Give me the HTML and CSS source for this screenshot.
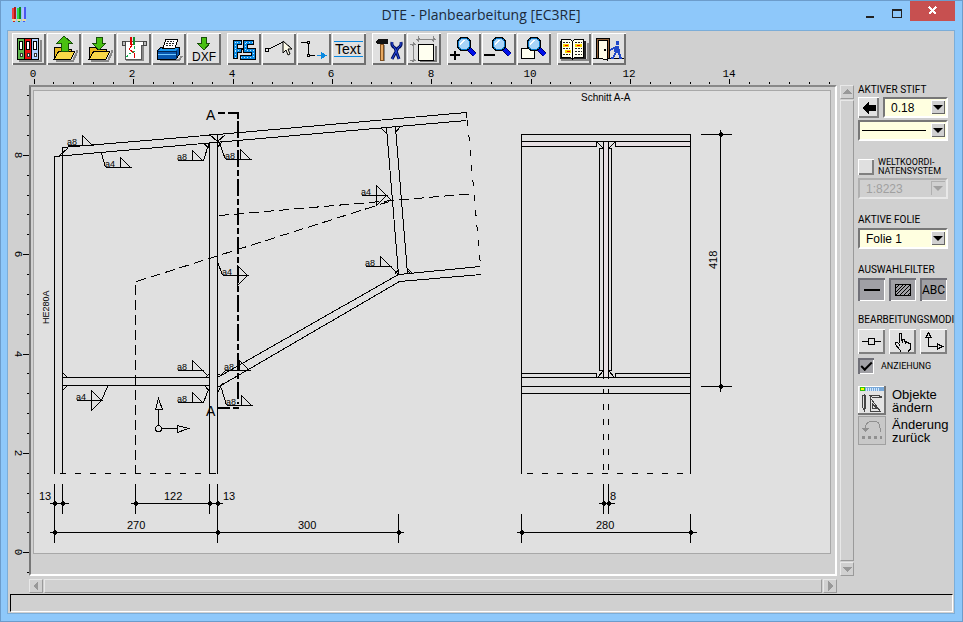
FILE: index.html
```html
<!DOCTYPE html>
<html lang="de">
<head>
<meta charset="utf-8">
<title>DTE - Planbearbeitung [EC3RE]</title>
<link rel="stylesheet" href="styles.css">
</head>
<body>
<svg class="defs" aria-hidden="true">
  <defs>
    <symbol id="lens" viewBox="0 0 34 32">
      <path d="M22 16l6 6" stroke="#000060" stroke-width="5"/>
      <path d="M22 16l6 6" stroke="#0010e8" stroke-width="3"/>
      <circle cx="17" cy="11" r="6" fill="#a8d4f8" stroke="#000" stroke-width="3"/>
      <circle cx="17" cy="11" r="6" fill="#a8d4f8" stroke="#0878c8" stroke-width="1"/>
      <path d="M13 10l3-3h2l-5 6z" fill="#fff"/>
    </symbol>
    <symbol id="folder" viewBox="0 0 34 32">
      <path d="M9 28h17l4-9v-2" fill="none" stroke="#888" stroke-width="2"/>
      <path d="M7 26V15l1-1h5l2 2h9v3" fill="#e8b820" stroke="#000"/>
      <path d="M7 26l5-8h16l-4 8z" fill="#f8d848" stroke="#000"/>
    </symbol>
    <symbol id="weld" viewBox="0 0 28 12" overflow="visible">
      <path d="M0 0h26M15 0v-10l10 10" fill="none" stroke="#000"/>
    </symbol>
    <symbol id="weld2" viewBox="0 0 28 12" overflow="visible">
      <path d="M0 0h26M15 -10v20l10-10z" fill="none" stroke="#000"/>
    </symbol>
    <symbol id="dot" viewBox="0 0 6 6" overflow="visible">
      <path d="M-1 -2h2M-2 -1h4M-2 0h1M1 0h1M-2 1h4M-1 2h2" stroke="#000" fill="none"/>
    </symbol>
  </defs>
</svg>
<div class="window">
  <header class="titlebar">
    <svg class="app-icon" width="16" height="16" viewBox="0 0 16 16">
      <path d="M0 1h2v12H0z" fill="#f04040"/><path d="M2 0h2v13H2z" fill="#b01818"/>
      <path d="M5 1h2v12H5z" fill="#30d848"/><path d="M7 0h2v13H7z" fill="#108820"/>
      <path d="M10 1h2v12h-2z" fill="#b8c0ff"/><path d="M12 0h2v13h-2z" fill="#4858f0"/>
      <path d="M0 12h4v2H0zM5 12h4v2H5zM10 12h4v2h-4z" fill="#e8d8a0"/>
      <path d="M1 14h2v1H1z" fill="#d02020"/><path d="M6 14h2v1H6z" fill="#108820"/><path d="M11 14h2v1h-2z" fill="#4858f0"/>
    </svg>
    <h1>DTE - Planbearbeitung [EC3RE]</h1>
    <div class="caption-buttons">
      <button class="cap" aria-label="Minimieren"><svg width="10" height="16"><path d="M1 13h8v2H1z" fill="#222"/></svg></button>
      <button class="cap" aria-label="Maximieren"><svg width="10" height="16"><path d="M0 6h10v9H0zM1 8v6h8V8z" fill="#222" fill-rule="evenodd"/></svg></button>
      <button class="cap close" aria-label="Schließen"><svg width="10" height="10"><path d="M1 1l7 7M8 1l-7 7" stroke="#fff" stroke-width="2"/></svg></button>
    </div>
  </header>

  <main class="client">
    <nav class="toolbar" aria-label="Werkzeuge">
      <div class="group">
        <button aria-label="Projekte"><svg viewBox="0 0 34 32">
          <path d="M7 28h22V7" fill="none" stroke="#888" stroke-width="2"/>
          <path d="M5.500 5.500h7v21h-7z" fill="#60b850" stroke="#000"/><path d="M12.500 5.500h7v21h-7z" fill="#e81010" stroke="#000"/><path d="M19.500 5.500h7v21h-7z" fill="#b0d0ff" stroke="#000"/>
          <path d="M7.500 8.500h3v8h-3zM14.500 8.500h3v8h-3zM21.500 8.500h3v8h-3z" fill="#fff" stroke="#000"/>
          <path d="M8 20h2v3H8zM15 20h2v3h-2zM22 20h2v3h-2z" fill="#fff" stroke="#333"/>
        </svg></button>
        <button aria-label="Laden"><svg viewBox="0 0 34 32"><use href="#folder" width="34" height="32"/><path d="M17 3l-7 7h4v8h7v-8h4z" fill="#48c010" stroke="#185008"/></svg></button>
        <button aria-label="Sichern"><svg viewBox="0 0 34 32"><use href="#folder" width="34" height="32"/><path d="M14 4h6v6h4l-7 7-7-7h4z" fill="#48c010" stroke="#185008"/></svg></button>
        <button aria-label="Plotten"><svg viewBox="0 0 34 32">
          <path d="M9 27h17V12" stroke="#888" fill="none" stroke-width="2"/>
          <path d="M7 8h19v4h-2v14H8V12H5V9z" fill="#fff" stroke="#555"/><path d="M5 8h3v4H5zM26 8h3v4h-3z" fill="#bbb" stroke="#444"/>
          <path d="M14 4v8" stroke="#e00000" stroke-width="2"/><path d="M17 4v8" stroke="#109030" stroke-width="2"/>
          <path d="M16 11l-4 5 5 4v5" stroke="#e00000" fill="none"/><path d="M17 13v3m1 2l-6 3-3 4" stroke="#10b050" fill="none" stroke-dasharray="3 1"/>
        </svg></button>
        <button aria-label="Drucken"><svg viewBox="0 0 34 32">
          <path d="M8 27h19l3-4" stroke="#888" fill="none" stroke-width="2"/>
          <path d="M5 18l4-4h18v8l-3 4H5z" fill="#0858b0" stroke="#000"/><path d="M6 18l3-3h17l-2 3z" fill="#1898f0"/><path d="M6 21h18" stroke="#70c8ff"/><path d="M24 18h-18M24 18v8" stroke="#002858"/>
          <path d="M11 15l3-9h12l-3 9z" fill="#fff" stroke="#000"/><path d="M15 8h7M14 10h8M14 12h7" stroke="#222" stroke-dasharray="2 1"/>
        </svg></button>
        <button aria-label="DXF-Export"><svg viewBox="0 0 34 32"><path d="M14 4h5v6h4l-6 7-7-7h4z" fill="#48c010" stroke="#185008"/><text class="t-dxf" x="5" y="28">DXF</text></svg></button>
      </div>
      <div class="group">
        <button aria-label="Gesamtansicht"><svg viewBox="0 0 34 32">
          <path d="M15 9H8v17M8 17h7M27 9h-9v8h8v7H13M15 17v-2" fill="none" stroke="#000" stroke-width="5"/>
          <path d="M14 9H8v16M8 17h6M26 9h-8v8h8v7H14" fill="none" stroke="#0888e0" stroke-width="3"/>
          <path d="M14 9H8v16M8 17h6M26 9h-8v8h8v7H14" fill="none" stroke="#c0e8ff" stroke-dasharray="1 2"/>
        </svg></button>
        <button aria-label="Punkt wählen"><svg viewBox="0 0 34 32"><path d="M5 17l16-8 7 5" fill="none" stroke="#000"/><path d="M3.500 15.500h3v3h-3z" fill="#eee" stroke="#000"/><path class="smooth" d="M21 8v12l3-3 2 5 2-1-2-5h4z" fill="#fffce8" stroke="#000"/></svg></button>
        <button aria-label="Polygon"><svg viewBox="0 0 34 32"><path d="M4 9.500h7.500v13H18" fill="none" stroke="#000"/><path d="M10.500 8.500h2v2h-2zM10.500 21.500h2v2h-2z" fill="#eee" stroke="#000"/><path d="M20 22.500h5" stroke="#0888e0"/><path d="M24 19l6 3.500-6 3.500z" fill="#0888e0"/></svg></button>
        <button aria-label="Text"><svg viewBox="0 0 34 32"><path d="M2 8.500h29M2 23.500h29" stroke="#0888e0"/><text class="t-text" x="3" y="21">Text</text></svg></button>
      </div>
      <div class="group">
        <button aria-label="Einstellungen"><svg viewBox="0 0 34 32">
          <path d="M12 12v16" stroke="#888" stroke-width="2"/><path d="M8 11h3v16H8z" fill="#e8a860" stroke="#805020"/><path d="M3 9l3-3h10v5H6z" fill="#111"/>
          <g class="smooth" fill="none"><path d="M20 9q-1 4 3 6l4 11M29 9q1 4-3 6l-6 11" stroke="#001060" stroke-width="3"/><path d="M20 9q-1 4 3 6l4 11M29 9q1 4-3 6l-6 11" stroke="#2848e0"/></g>
        </svg></button>
        <button aria-label="Blattformat"><svg viewBox="0 0 34 32"><path d="M13 28h16V13" stroke="#777" fill="none" stroke-width="2"/><path d="M11.500 11.500h15v16h-15z" fill="#fffff0" stroke="#000"/><path d="M9 6.500h20M11.500 3v6M26.500 3v6M6.500 9v20M3 11.500h6M3 27.500h6M10 8l3-3M25 8l3-3M5 13l3-3M5 29l3-3" stroke="#888"/></svg></button>
      </div>
      <div class="group">
        <button aria-label="Vergrößern"><svg viewBox="0 0 34 32"><use href="#lens" width="34" height="32"/><path d="M3 22h10M8 18v9" stroke="#000" stroke-width="2"/></svg></button>
        <button aria-label="Verkleinern"><svg viewBox="0 0 34 32"><use href="#lens" width="34" height="32"/><path d="M2 22h11" stroke="#000" stroke-width="2"/></svg></button>
        <button aria-label="Ausschnitt"><svg viewBox="0 0 34 32"><path d="M4.500 15.500h13v10h-13z" fill="#fffff0" stroke="#000"/><use href="#lens" width="34" height="32"/></svg></button>
      </div>
      <div class="group">
        <button aria-label="Handbuch"><svg viewBox="0 0 34 32">
          <path d="M3 8h26v18H3z" fill="#222"/><path d="M4 27h27V10" stroke="#888" fill="none" stroke-width="2"/>
          <path d="M4.500 6.500h9l2 2 2-2h9v18h-9l-2 2-2-2h-9z" fill="#fffff0" stroke="#000"/><path d="M15.500 8v18" stroke="#000"/>
          <path d="M6 12.500h6M8 18.500h6M18 12.500h7" stroke="#f8d800" stroke-width="3"/><path d="M8 12.500h3M10 18.500h3M20 12.500h3" stroke="#f00000"/>
          <path d="M6 9.500h7M6 15.500h7M6 21.500h7M18 9.500h7M18 15.500h7M18 18.500h7M18 21.500h7" stroke="#222" stroke-dasharray="2 1"/>
        </svg></button>
        <button aria-label="Beenden"><svg viewBox="0 0 34 32">
          <path d="M1 25.500h31" stroke="#000"/><path d="M4 5h13v20H4z" fill="#906038" stroke="#000"/><path d="M6.500 7.500h9V27l-9-2z" fill="#fffce8" stroke="#000"/><path d="M12 16h2v2h-2z" fill="#000"/>
          <path d="M24 8h3v4h-3zM23 13h4l1 5-1 2h-4l-1-3z" fill="#2048c8"/><path d="M24 14l-6 3M24 19l-3 6h-2M26 19l2 3v3h2" stroke="#2048c8" stroke-width="2" fill="none"/>
        </svg></button>
      </div>
    </nav>

    <div class="workspace">
      <svg class="ruler ruler-x" role="img" aria-label="Lineal horizontal">
        <path class="minor" d="M24 17v2M44 17v2M64 17v2M84 17v2M124 17v2M144 17v2M163 17v2M183 17v2M223 17v2M243 17v2M263 17v2M283 17v2M322 17v2M342 17v2M362 17v2M382 17v2M422 17v2M442 17v2M462 17v2M482 17v2M521 17v2M541 17v2M561 17v2M581 17v2M621 17v2M641 17v2M661 17v2M680 17v2M720 17v2M740 17v2M760 17v2M780 17v2M800 17v2"/>
        <path d="M5 14v5M104 14v5M204 14v5M303 14v5M402 14v5M502 14v5M601 14v5M700 14v5"/>
        <g class="digits"><text x="4" y="12">0</text><text x="103" y="12">2</text><text x="203" y="12">4</text><text x="302" y="12">6</text><text x="402" y="12">8</text><text x="501" y="12">10</text><text x="600" y="12">12</text><text x="700" y="12">14</text></g>
      </svg>
      <svg class="ruler ruler-y" role="img" aria-label="Lineal vertikal">
        <path class="minor" d="M19 10h2M19 30h2M19 50h2M19 90h2M19 110h2M19 129h2M19 149h2M19 189h2M19 209h2M19 229h2M19 249h2M19 288h2M19 308h2M19 328h2M19 348h2M19 388h2M19 408h2M19 427h2M19 447h2M19 487h2"/>
        <path d="M15 70h6M15 169h6M15 269h6M15 368h6M15 467h6"/>
        <g class="digits"><text transform="translate(7 70) rotate(90)">8</text><text transform="translate(7 169) rotate(90)">6</text><text transform="translate(7 269) rotate(90)">4</text><text transform="translate(7 368) rotate(90)">2</text><text transform="translate(7 467) rotate(90)">0</text></g>
      </svg>
      <section class="view" aria-label="Planansicht">
        <div class="sheet">
        <svg class="plan" viewBox="34 91 796 462">
          <g class="ink" transform="translate(.5 .5)">
            <path d="M54 156V473M62 147V473M209 142V473M217 134V473"/>
            <path d="M62 147L217 134L466 112V117M54 156L466 120M54 156H58L68 147"/>
            <path d="M203 143L208 147V142M209 134L217 141L225 134M217 147L222 141M209 134H217"/>
            <path d="M386 127L398 274M395 127L407 273M381 128L386 133V128M395 132L399 127"/>
            <path d="M398 274L480 266M399 281L481 274M217 377L398 274M217 387L399 281"/>
            <path d="M394 274L398 269V274M407 268L412 273H407zM407 270L410 273" />
            <path d="M62 377H209M62 385H209M62 372L67 377M62 390L67 385M205 377L209 373M204 385L209 391M217 374L222 375M217 392L222 383"/>
            <path class="d-axis" d="M219 215L392 200L474 193M136 281L392 200M135 284V473"/>
            <path class="d-break" d="M467 120L480 265M59 473H217"/>
            <path d="M203 160L208 144M218 140L225 159M101 153L105 167M217 261L222 275M386 195L392 201M390 266L398 274M107 386L101 400M202 370L208 376M224 371L218 377M203 402L208 389M221 388L226 405"/>
            <g>
              <use href="#weld" x="67" y="145" width="28" height="12"/><use href="#weld" x="105" y="167" width="28" height="12"/>
              <use href="#weld" x="177" y="160" width="28" height="12"/><use href="#weld" x="225" y="159" width="28" height="12"/>
              <use href="#weld2" x="222" y="275" width="28" height="12"/><use href="#weld2" x="361" y="195" width="28" height="12"/>
              <use href="#weld" x="365" y="266" width="28" height="12"/><use href="#weld2" x="76" y="400" width="28" height="12"/>
              <use href="#weld" x="177" y="370" width="28" height="12"/><use href="#weld" x="224" y="370" width="28" height="12"/>
              <use href="#weld" x="177" y="402" width="28" height="12"/><use href="#weld" x="226" y="405" width="28" height="12"/>
            </g>
            <path class="section" d="M217 112H224M227 112H237V118"/>
            <path class="section d-section" d="M237 120V403"/>
            <path class="section" d="M217 407H229M232 407H238"/>
            <path d="M158 425V408M155 409H162L158 398zM161 428H177M177 425V432L188 428z"/><circle cx="158" cy="428" r="3" class="sheet-fill"/>
            <path d="M54 483V542M62 483V513M135 483V513M209 483V513M217 483V542M398 513V542M49 503H68M130 503H222M49 532H403"/>

            <path class="flange" d="M521 141H596V146H521zM615 141H690V146H615zM603 141H608V377H603z"/>
            <path d="M521 473V134H690V473M521 141H690M521 146H596V141M690 146H615V141M597 142L603 148M614 142L608 148"/>
            <path d="M603 141V378M608 141V378M603 148H599V370H603M608 148H611V370H608M521 373H596V377M690 373H615V377M597 377L603 370M614 377L608 370M521 377H690M521 386H690M521 393H690"/>
            <path d="M603 388V393M608 388V393"/>
            <path class="d-break" d="M603 403V470M608 403V470M526 473H684"/>
            <path d="M603 483V513M608 483V513M598 503H614M521 513V542M690 513V542M516 532H696M720 129V391M700 134H731M700 386H731"/>
            <g>
              <use href="#dot" x="54" y="503" width="6" height="6"/><use href="#dot" x="62" y="503" width="6" height="6"/><use href="#dot" x="135" y="503" width="6" height="6"/><use href="#dot" x="209" y="503" width="6" height="6"/><use href="#dot" x="217" y="503" width="6" height="6"/>
              <use href="#dot" x="54" y="532" width="6" height="6"/><use href="#dot" x="217" y="532" width="6" height="6"/><use href="#dot" x="398" y="532" width="6" height="6"/>
              <use href="#dot" x="603" y="503" width="6" height="6"/><use href="#dot" x="608" y="503" width="6" height="6"/><use href="#dot" x="521" y="532" width="6" height="6"/><use href="#dot" x="690" y="532" width="6" height="6"/><use href="#dot" x="720" y="134" width="6" height="6"/><use href="#dot" x="720" y="386" width="6" height="6"/>
            </g>
          </g>
          <g class="dim">
            <text x="39" y="500">13</text><text x="164" y="500">122</text><text x="223" y="500">13</text><text x="127" y="529">270</text><text x="298" y="529">300</text>
            <text x="610" y="500">8</text><text x="596" y="529">280</text><text transform="translate(717 269) rotate(-90)">418</text>
            <text class="caption" x="581" y="101">Schnitt A-A</text><text class="profile" transform="translate(49 324) rotate(-90)">HE280A</text>
          </g>
          <g class="mark"><text x="206" y="120">A</text><text x="206" y="416">A</text></g>
          <g class="weld-size">
            <text x="67" y="145">a8</text><text x="105" y="167">a4</text><text x="177" y="160">a8</text><text x="225" y="159">a8</text><text x="222" y="275">a4</text><text x="361" y="195">a4</text><text x="365" y="266">a8</text><text x="76" y="400">a4</text><text x="177" y="370">a8</text><text x="224" y="370">a8</text><text x="177" y="402">a8</text><text x="226" y="405">a8</text>
          </g>
        </svg>
        </div>
      </section>
      <div class="scroll scroll-y">
        <button aria-label="Nach oben"><svg width="10" height="10"><path d="M0 7l5-5 5 5z"/></svg></button>
        <div class="thumb"></div>
        <button aria-label="Nach unten"><svg width="10" height="10"><path d="M0 3l5 5 5-5z"/></svg></button>
      </div>
      <div class="scroll scroll-x">
        <button aria-label="Nach links"><svg width="10" height="10"><path d="M7 0L2 5l5 5z"/></svg></button>
        <div class="thumb"></div>
        <button aria-label="Nach rechts"><svg width="10" height="10"><path d="M3 0l5 5-5 5z"/></svg></button>
      </div>

      <aside class="panel">
        <section class="pen">
          <label for="pen">AKTIVER STIFT</label>
          <div class="row">
            <button class="raised back" aria-label="Stift zurück"><svg width="14" height="14"><path d="M0 7l7-7v4h7v6H7v4z"/></svg></button>
            <div class="combo"><select id="pen"><option>0.18</option></select><span class="arrow"></span></div>
          </div>
          <div class="combo line"><select aria-label="Linientyp"><option></option></select><span class="stroke"></span><span class="arrow"></span></div>
        </section>
        <section class="coords">
          <label class="check"><input type="checkbox"><span>WELTKOORDI-<br>NATENSYSTEM</span></label>
          <div class="combo off"><select disabled aria-label="Maßstab"><option>1:8223</option></select><span class="arrow"></span></div>
        </section>
        <section class="layer">
          <label for="layer">AKTIVE FOLIE</label>
          <div class="combo"><select id="layer"><option>Folie 1</option></select><span class="arrow"></span></div>
        </section>
        <section class="filters">
          <h2>AUSWAHLFILTER</h2>
          <div class="trio">
            <button class="pressed" aria-label="Linien"><svg width="22" height="18"><path d="M3 9h16" stroke="#000" stroke-width="2"/></svg></button>
            <button class="pressed" aria-label="Flächen"><svg width="22" height="18"><path d="M3.500 3.500h15v11h-15z" fill="none" stroke="#000"/><path d="M4 7l3-3M4 11l7-7M4 14L14 4M8 14L18 4M12 14l6-6M16 14l2-2" stroke="#000"/></svg></button>
            <button class="pressed abc">ABC</button>
          </div>
        </section>
        <section class="modes">
          <h2>BEARBEITUNGSMODI</h2>
          <div class="trio">
            <button class="raised" aria-label="Punkt"><svg width="22" height="20"><path d="M1 9.500h6M14 9.500h6M7.500 6.500h6v6h-6z" fill="none" stroke="#000"/></svg></button>
            <button class="raised" aria-label="Verschieben"><svg width="22" height="20"><path d="M7.500 11V1.500h2V8l1-1h2v2h2v1h2v1h2v6l-2 2v1H8v-2l-5-6v-2h2l2 2v2M10.500 8v3M13.500 9v3" fill="none" stroke="#000"/></svg></button>
            <button class="raised" aria-label="Achsen"><svg width="22" height="20"><path d="M5.500 6v8.500H14M3 5.500h5l-2.500-5zM14.500 12v5l5-2.500z" fill="none" stroke="#000"/></svg></button>
          </div>
          <label class="check snap"><input type="checkbox" checked><span>ANZIEHUNG</span></label>
        </section>
        <section class="actions">
          <button class="action"><svg width="28" height="29" viewBox="0 0 28 29">
            <path d="M0 0h28v29H0z" fill="#e4e4e4"/><path d="M0 0h28v1H0zM0 0h1v29H0z" fill="#fff"/><path d="M2 1h24v4H2z" fill="#78a8d8"/><path d="M2 1h5v4H2z" fill="#30c010"/><path d="M3 2h3v2H3z" fill="#ff0"/><path d="M8 3h14" stroke="#d0e8ff" stroke-dasharray="1 1" stroke-width="3"/>
            <path d="M0 29h28V0h-2v27H0z" fill="#777"/><path d="M6.500 8v17M4.500 9h3v12l-1 4-2-4zM14 11l-3-2h8l5 2zM12.500 12v13H22zM14.500 18v4h4z" fill="none" stroke="#444"/></svg><span>Objekte ändern</span></button>
          <button class="action"><svg width="28" height="29" viewBox="0 0 28 29">
            <path d="M.5.500h27v28H.500z" fill="#c8c8c8" stroke="#a0a0a0"/><path d="M7 12q1-7 8-7t7 7v4" fill="none" stroke="#909090"/><path d="M3 12h8l-4 4z" fill="#909090"/><path d="M4 21h20" stroke="#909090" stroke-width="3" stroke-dasharray="3 3"/></svg><span>Änderung zurück</span></button>
        </section>
      </aside>
    </div>
    <footer class="status"></footer>
  </main>
</div>
</body>
</html>
```
FILE: styles.css
```css
* { box-sizing: border-box; }
body { margin: 0; font-family: "Liberation Sans", Arial, sans-serif; font-size: 12px; color: #000; }
button { padding: 0; border: 0; font: inherit; color: inherit; background: none; }
h1, h2 { margin: 0; font-weight: 400; }
svg { display: block; shape-rendering: crispEdges; }
.smooth { shape-rendering: auto; }
.defs { position: absolute; width: 0; height: 0; }

.window { display: flex; flex-direction: column; min-height: 100vh; padding: 0 7px 7px 6px; border: 1px solid #6c9ccb; background: #8ec8fa; }
.titlebar { display: grid; grid-template-columns: 150px 1fr 150px; align-items: start; height: 29px; flex: none; }
.app-icon { margin: 6px 0 0 5px; }
h1 { padding-top: 4px; text-align: center; font: 14px/20px "Open Sans", "Noto Sans", sans-serif; color: #1b2a3a; white-space: nowrap; }
.caption-buttons { display: flex; justify-content: flex-end; }
.cap { display: grid; place-items: center; width: 27px; height: 20px; }
.cap svg { height: 16px; }
.close { width: 45px; background: #c75050; }
.close svg { height: 10px; }

.client { display: flex; flex-direction: column; flex: 1; min-height: 0; border: 1px solid #7badd8; background: #d0d0d0; }
.toolbar { display: flex; gap: 6px; padding: 2px 4px 0; }
.group { display: flex; gap: 1px; }
.toolbar button { width: 34px; height: 32px; background: #e0e0e0; box-shadow: inset 1px 1px #fff, inset -2px -2px #707070; }
.toolbar svg { width: 34px; height: 32px; }
.toolbar text { font-family: "Liberation Sans", Arial, sans-serif; }
.t-dxf { font-size: 12px; }
.t-text { font-size: 14px; }

.workspace { display: grid; grid-template-columns: 21px minmax(0, 1fr) 17px 100px; grid-template-rows: 20px minmax(0, 1fr) 16px; column-gap: 0; flex: 1; min-height: 0; }
.ruler { width: 100%; height: 100%; overflow: visible; }
.ruler path { stroke: #000; stroke-width: 1px; fill: none; }
.ruler-x { grid-area: 1 / 2; }
.ruler-y { grid-area: 2 / 1; }
.digits { font: 11px "Liberation Mono", monospace; text-anchor: middle; }
.view { grid-area: 2 / 2; display: flex; padding: 3px 4px 20px 2px; border: 2px solid; border-color: #888 #fff #fff #777; background: #d0d0d0; }
.sheet { flex: 1; min-width: 0; border: 1px solid #a8a8a8; background: #e0e0e0; }
.plan { width: 100%; height: 100%; }
.ink { fill: none; stroke: #000; stroke-width: 1px; }
.d-axis { stroke-dasharray: 10 5; }
.d-break { stroke-dasharray: 6 9; }
.section { stroke-width: 2px; }
.d-section { stroke-dasharray: 17 3 6 3; }
.flange { fill: #e6dfe3; stroke: none; }
.sheet-fill { fill: #e0e0e0; }
.dim, .mark, .weld-size { font-family: "Liberation Sans", Arial, sans-serif; }
.dim { font-size: 11px; }
.caption { font-size: 10px; }
.profile { font-size: 9px; }
.mark { font-size: 14px; }
.weld-size { font-size: 9px; }

.scroll { display: flex; gap: 1px; }
.scroll button, .thumb { border: 1px solid; border-color: #e8e8e8 #9a9a9a #9a9a9a #e8e8e8; }
.scroll button { display: grid; place-items: center; flex: none; width: 14px; height: 14px; fill: #989898; }
.thumb { flex: 1; }
.scroll-y { grid-area: 2 / 3; flex-direction: column; margin-left: 3px; width: 14px; }
.scroll-x { grid-area: 3 / 2; height: 14px; margin-top: 3px; }

.panel { grid-area: 1 / 4 / 4 / 5; display: flex; flex-direction: column; padding: 20px 6px 0 4px; font: 10px/10px Roboto, sans-serif; white-space: nowrap; }
.panel h2 { font: inherit; }
.panel section { display: flex; flex-direction: column; }
.row { display: flex; gap: 4px; }
.pen { gap: 2px; }
.raised { background: #e0e0e0; box-shadow: inset 1px 1px #fff, inset -2px -2px #808080; }
.pressed { background: #a0a0a5; box-shadow: inset 2px 2px #707078, inset -1px -1px #fff; }
.back { display: grid; place-items: center; width: 21px; height: 21px; flex: none; }
.combo { position: relative; display: flex; flex: 1; height: 21px; border: 2px solid; border-color: #777 #fff #fff #777; background: #ffffe0; }
.panel section > .combo { flex: none; }
.combo select { appearance: none; width: 100%; padding: 0 0 0 6px; border: 0; background: none; font: 12px/16px "Liberation Sans", Arial, sans-serif; color: #000; opacity: 1; }
.arrow { position: absolute; top: 1px; right: 1px; width: 14px; height: 14px; background: #d0d0d0; box-shadow: inset 1px 1px #fff, inset -1px -1px #666; pointer-events: none; }
.arrow::after { content: ""; position: absolute; left: 2px; top: 5px; border: solid transparent; border-width: 5px 5px 0; border-top-color: #000; }
.stroke { position: absolute; left: 2px; right: 20px; top: 8px; height: 1px; background: #000; pointer-events: none; }
.off { border-color: #b0b0b0 #e8e8e8 #e8e8e8 #b0b0b0; background: none; }
.off select { color: #a0a0a0; }
.off .arrow { box-shadow: inset 1px 1px #b0b0b0; }
.off .arrow::after { border-top-color: #a0a0a0; }
.check { display: flex; gap: 4px; align-items: center; font-size: 9px; line-height: 9px; }
.check input { appearance: none; flex: none; width: 16px; height: 16px; margin: 0; background: #e0e0e0; box-shadow: inset 1px 1px #fff, inset -2px -2px #808080; }
.check input:checked { display: grid; place-items: center; background: #a0a0a5; box-shadow: inset 2px 2px #707078, inset -1px -1px #fff; }
.check input:checked::after { content: ""; width: 9px; height: 4px; margin-top: -3px; border: solid #000; border-width: 0 0 2px 2px; transform: rotate(-45deg); }
.coords { gap: 2px; margin-top: 17px; }
.layer { gap: 3px; margin-top: 16px; }
.filters { gap: 3px; margin-top: 16px; }
.modes { gap: 4px; margin-top: 14px; }
.trio { display: grid; grid-template-columns: repeat(3, 27px); gap: 4px; }
.trio button { display: grid; place-items: center; height: 23px; }
.trio .abc { font: 12px Roboto, sans-serif; }
.modes .trio button { height: 25px; }
.snap { gap: 7px; }
.actions { gap: 1px; margin-top: 12px; }
.action { display: grid; grid-template-columns: 28px 1fr; gap: 6px; align-items: center; text-align: left; white-space: normal; font: 13px/13px "Liberation Sans", Arial, sans-serif; }
.status { flex: none; height: 18px; margin: 2px 1px 1px 2px; border: 1px solid; border-color: #000 #fff #fff #000; }
```
